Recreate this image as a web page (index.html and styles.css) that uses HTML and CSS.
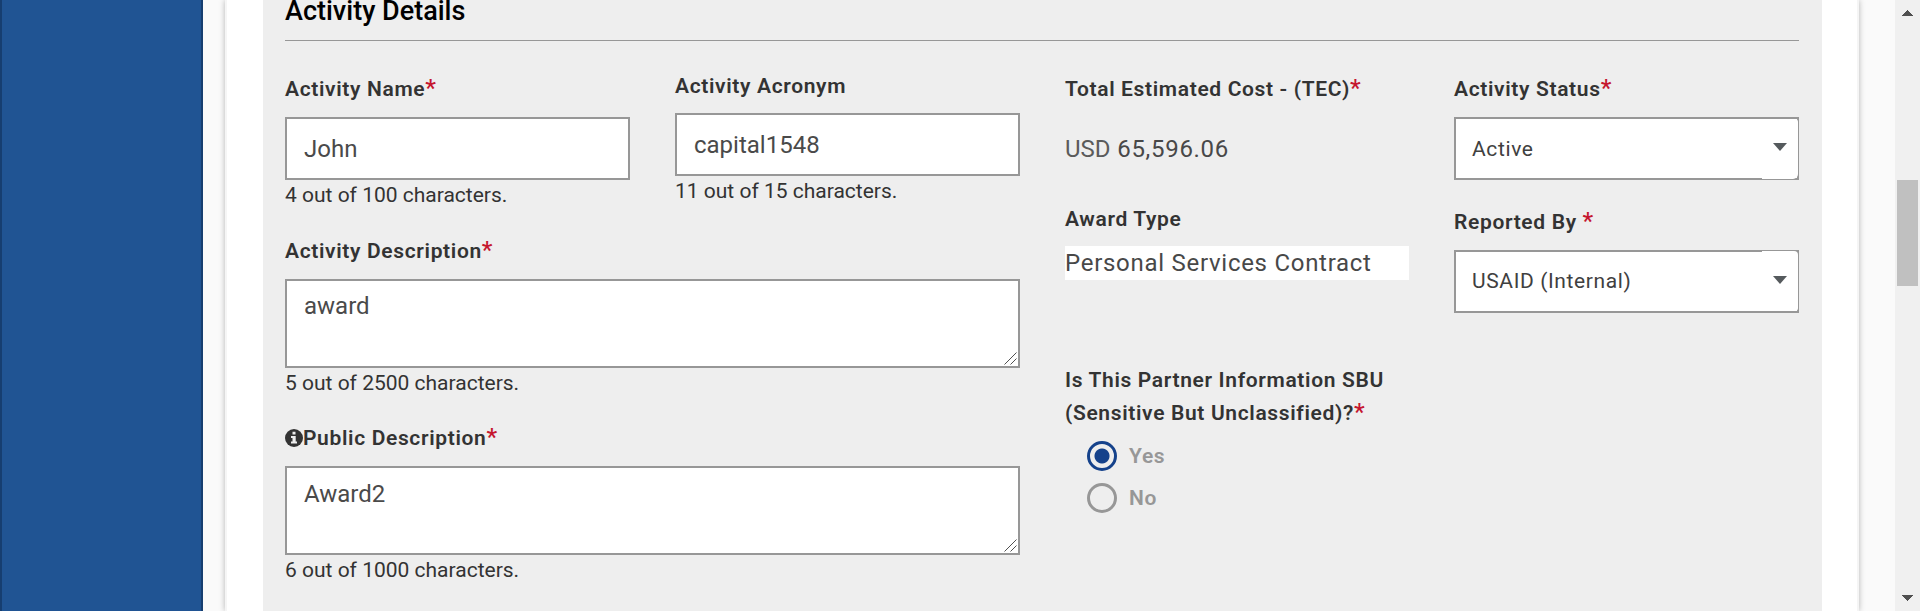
FILE: index.html
```html
<!DOCTYPE html>
<html lang="en">
<head>
<meta charset="utf-8">
<title>Activity Details</title>
<link rel="stylesheet" href="styles.css">
</head>
<body>
<div class="app">
  <aside class="sidebar"></aside>
  <main class="page">
    <div class="card">
      <form class="panel">
        <h2 class="title">Activity Details</h2>
        <div class="columns">
          <div class="left">
            <div class="pair">
              <div class="field">
                <label class="label" for="name">Activity Name<span class="req">*</span></label>
                <input class="input" id="name" value="John">
                <div class="count">4 out of 100 characters.</div>
              </div>
              <div class="field field-plain">
                <label class="label" for="acronym">Activity Acronym</label>
                <input class="input" id="acronym" value="capital1548">
                <div class="count">11 out of 15 characters.</div>
              </div>
            </div>
            <div class="field">
              <label class="label" for="desc">Activity Description<span class="req">*</span></label>
              <div class="area-wrap">
                <textarea class="input area" id="desc">award</textarea>
                <svg class="grip" viewBox="0 0 13 13"><path d="M.5 12.5l12-12M6.5 12.5l6-6" stroke="#505050" fill="none"/></svg>
              </div>
              <div class="count">5 out of 2500 characters.</div>
            </div>
            <div class="field">
              <label class="label" for="public"><svg class="info" viewBox="0 0 18 18"><circle cx="9" cy="9" r="9" fill="#333"/><path d="M7.5 2.8h3v2.6h-3zM6 7h4.7v5.4H12v2H6v-2h1.5V9H6z" fill="#eee"/></svg>Public Description<span class="req">*</span></label>
              <div class="area-wrap">
                <textarea class="input area area-public" id="public">Award2</textarea>
                <svg class="grip" viewBox="0 0 13 13"><path d="M.5 12.5l12-12M6.5 12.5l6-6" stroke="#505050" fill="none"/></svg>
              </div>
              <div class="count">6 out of 1000 characters.</div>
            </div>
          </div>
          <div class="column">
            <div class="label">Total Estimated Cost - (TEC)<span class="req">*</span></div>
            <div class="cost"><span class="currency">USD</span> <span class="amount">65,596.06</span></div>
            <div class="label label-award">Award Type</div>
            <div class="award">Personal Services Contract</div>
            <div class="label label-sbu">Is This Partner Information SBU<br>(Sensitive But Unclassified)?<span class="req">*</span></div>
            <div class="radios">
              <div class="radio radio-on"><span class="ring"></span>Yes</div>
              <div class="radio"><span class="ring"></span>No</div>
            </div>
          </div>
          <div class="column">
            <div class="label">Activity Status<span class="req">*</span></div>
            <div class="select select-status"><span>Active</span><span class="toggle toggle-low"><i class="caret"></i></span></div>
            <div class="label label-reported">Reported By <span class="req">*</span></div>
            <div class="select"><span>USAID (Internal)</span><span class="toggle toggle-high"><i class="caret"></i></span></div>
          </div>
        </div>
      </form>
    </div>
  </main>
  <div class="scrollbar">
    <svg class="arrow" viewBox="0 0 11 6" shape-rendering="crispEdges"><path d="M5.5 0L11 5.5V6H0V5.5z" fill="#505050"/></svg>
    <div class="thumb"></div>
    <svg class="arrow" viewBox="0 0 11 6" shape-rendering="crispEdges"><path d="M0 0H11V.5L5.5 6L0 .5z" fill="#505050"/></svg>
  </div>
</div>
</body>
</html>
```
FILE: styles.css
```css
* { box-sizing: border-box; }
body {
  margin: 0;
  overflow: hidden;
  font-family: Roboto, sans-serif;
  color: #333;
}
.app {
  display: flex;
  height: 611px;
  background: #fafafa;
}
.sidebar {
  width: 203px;
  background: #205493;
  border: solid #163e70;
  border-width: 0 2px;
}
.page {
  flex: 1;
  padding: 0 36px 0 22px;
  overflow: hidden;
}
.card {
  height: 611px;
  padding: 0 35px 0 36px;
  background: #fff;
  border: solid #f5f5f5;
  border-width: 0 2px;
  box-shadow: 0 0 6px rgba(0, 0, 0, .28);
}
.panel {
  height: 611px;
  padding: 0 23px 0 22px;
  background: #eee;
}
.title {
  height: 41px;
  margin: 0;
  border-bottom: 1px solid #979797;
  font-size: 27px;
  font-weight: 500;
  line-height: 22px;
  color: #000;
}
.columns {
  display: flex;
  gap: 45px;
  padding-top: 33px;
}
.left { width: 735px; }
.pair { display: flex; gap: 45px; height: 162px; }
.pair .field { width: 345px; }
.column { width: 344px; }
.column:last-child { width: 345px; }
.label {
  display: block;
  height: 43px;
  font-size: 21px;
  font-weight: 600;
  line-height: 30px;
  letter-spacing: .65px;
  white-space: nowrap;
}
.field-plain .label { height: 39px; line-height: 24px; }
.req {
  font-size: 24px;
  font-weight: 500;
  line-height: 20px;
  color: #c5162e;
  letter-spacing: 0;
}
.input {
  display: block;
  width: 100%;
  height: 63px;
  padding: 0 17px;
  border: 2px solid #979797;
  border-radius: 0;
  outline: 0;
  background: #fff;
  font: 400 24px Roboto, sans-serif;
  color: #4a4a4a;
}
.area { height: 89px; padding-top: 11px; overflow: hidden; resize: none; }
.area-public { padding-top: 12px; }
.area-wrap { position: relative; }
.grip {
  position: absolute;
  right: 3px;
  bottom: 3px;
  width: 13px;
  height: 13px;
}
.count {
  height: 55px;
  font-size: 21px;
  line-height: 31px;
}
.info { width: 18px; height: 18px; vertical-align: -2px; }
.cost {
  height: 87px;
  font-size: 24px;
  line-height: 65px;
  letter-spacing: .7px;
  color: #484848;
}
.currency { letter-spacing: 0; color: #5b5b5b; }
.label-award { height: 42px; }
.award {
  height: 34px;
  background: #fff;
  font-size: 24px;
  line-height: 34px;
  letter-spacing: .72px;
  color: #484848;
}
.label-sbu { height: 77px; line-height: 33px; margin-top: 84px; }
.radios { padding-left: 22px; }
.radio {
  display: flex;
  align-items: center;
  gap: 12px;
  height: 30px;
  margin-bottom: 12px;
  font-size: 21px;
  font-weight: 600;
  letter-spacing: .65px;
  color: #979797;
}
.ring {
  width: 30px;
  height: 30px;
  border: 3px solid #979797;
  border-radius: 50%;
}
.radio-on .ring {
  border-color: #15428b;
  background: radial-gradient(circle, #15428b 7px, transparent 8px);
}
.select {
  position: relative;
  height: 63px;
  padding-left: 16px;
  border: 2px solid #979797;
  background: #fff;
  font-size: 21px;
  line-height: 58px;
  letter-spacing: .62px;
  color: #404040;
}
.select-status { line-height: 60px; }
.label-reported { margin-top: 27px; }
.toggle {
  position: absolute;
  right: -1px;
  width: 36px;
  height: 60px;
  background: #fff;
}
.toggle-low { top: 0; border-radius: 0 3px 5px 0; }
.toggle-high { top: -1px; border-radius: 0 4px 3px 0; }
.caret {
  position: absolute;
  top: 24px;
  left: 11px;
  border: solid transparent;
  border-width: 8px 7px 0;
  border-top-color: #555a5d;
}
.toggle-high .caret { top: 25px; }
.scrollbar {
  display: flex;
  flex-direction: column;
  align-items: center;
  justify-content: space-between;
  width: 25px;
  padding: 10px 0;
  background: #f0f0f0;
}
.arrow { width: 11px; height: 6px; }
.thumb {
  width: 21px;
  height: 106px;
  margin: 164px 0 auto;
  background: #c0c0c0;
}
```
